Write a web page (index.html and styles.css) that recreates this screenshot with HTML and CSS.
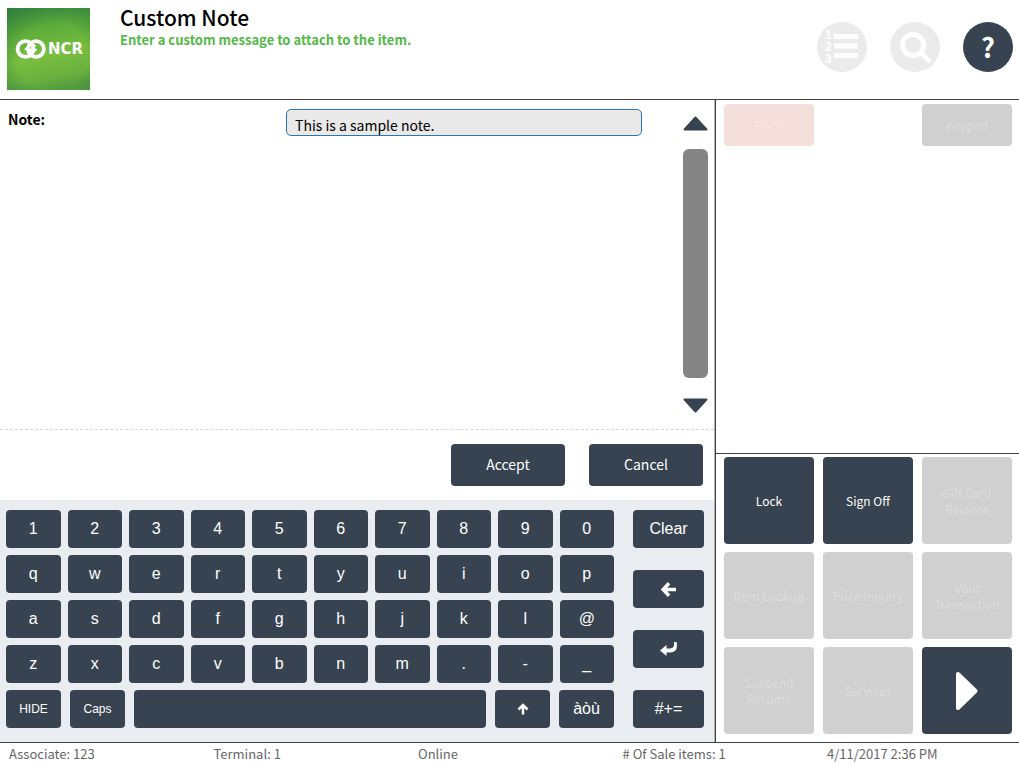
FILE: index.html
```html
<!DOCTYPE html>
<html lang="en">
<head>
<meta charset="utf-8">
<title>Custom Note</title>
<link rel="stylesheet" href="styles.css">
</head>
<body>
<header class="top">
  <svg class="logo" viewBox="0 0 83 82" role="img" aria-label="NCR">
    <defs>
      <linearGradient id="base" x1="0.3" y1="0" x2="0.5" y2="1">
        <stop offset="0" stop-color="#3f8f3d"/>
        <stop offset="0.25" stop-color="#5cab3a"/>
        <stop offset="0.6" stop-color="#78be3f"/>
        <stop offset="0.85" stop-color="#6bb13f"/>
        <stop offset="1" stop-color="#559d40"/>
      </linearGradient>
      <radialGradient id="shade" cx="0.55" cy="0.6" r="0.85">
        <stop offset="0.5" stop-color="#2b7a3d" stop-opacity="0"/>
        <stop offset="1" stop-color="#2b7a3d" stop-opacity="0.75"/>
      </radialGradient>
    </defs>
    <rect width="83" height="82" fill="url(#base)"/>
    <rect width="83" height="82" fill="url(#shade)"/>
    <g fill="none" stroke="#fff" stroke-width="3.8">
      <circle cx="18.500" cy="41" r="7.900"/>
      <circle cx="29" cy="41" r="7.900"/>
    </g>
    <path d="M18 42l7-7M20.500 45l8-8M23.500 47l6-6" stroke="#fff" stroke-width="2"/>
    <text class="logo-text" x="41" y="46">NCR</text>
  </svg>
  <div class="heading">
    <h1 class="title">Custom Note</h1>
    <p class="subtitle">Enter a custom message to attach to the item.</p>
  </div>
  <nav class="tools">
    <button class="round" disabled aria-label="Item list">
      <svg viewBox="0 0 50 50"><g class="list-nums"><text x="8" y="17">1</text><text x="8" y="29">2</text><text x="8" y="41">3</text></g>
      <path d="M17 12h24v5H17zM17 21.500h24v5H17zM17 31h24v5H17z" fill="#fff"/></svg>
    </button>
    <button class="round" disabled aria-label="Search">
      <svg viewBox="0 0 50 50" fill="none" stroke="#fff" stroke-width="5"><circle cx="23" cy="23" r="10.500"/><path d="M31 31l7.500 7.500" stroke-linecap="round"/></svg>
    </button>
    <button class="round help">?</button>
  </nav>
</header>
<main class="main">
  <section class="left">
    <div class="form">
      <label class="label" for="note">Note:</label>
      <input class="field" id="note" type="text" value="This is a sample note.">
      <div class="scroller">
        <button class="arrow" aria-label="Scroll up"><svg viewBox="0 0 25 15"><path d="M12.500 1.500L23.500 13.500H1.500z"/></svg></button>
        <div class="thumb"></div>
        <button class="arrow" aria-label="Scroll down"><svg viewBox="0 0 25 15"><path d="M12.500 13.500L23.500 1.500H1.500z"/></svg></button>
      </div>
    </div>
    <div class="actions">
      <button class="btn action">Accept</button>
      <button class="btn action">Cancel</button>
    </div>
    <div class="keyboard">
      <div class="rows">
        <div class="row"><button class="btn key">1</button><button class="btn key">2</button><button class="btn key">3</button><button class="btn key">4</button><button class="btn key">5</button><button class="btn key">6</button><button class="btn key">7</button><button class="btn key">8</button><button class="btn key">9</button><button class="btn key">0</button></div>
        <div class="row"><button class="btn key">q</button><button class="btn key">w</button><button class="btn key">e</button><button class="btn key">r</button><button class="btn key">t</button><button class="btn key">y</button><button class="btn key">u</button><button class="btn key">i</button><button class="btn key">o</button><button class="btn key">p</button></div>
        <div class="row"><button class="btn key">a</button><button class="btn key">s</button><button class="btn key">d</button><button class="btn key">f</button><button class="btn key">g</button><button class="btn key">h</button><button class="btn key">j</button><button class="btn key">k</button><button class="btn key">l</button><button class="btn key">@</button></div>
        <div class="row"><button class="btn key">z</button><button class="btn key">x</button><button class="btn key">c</button><button class="btn key">v</button><button class="btn key">b</button><button class="btn key">n</button><button class="btn key">m</button><button class="btn key">.</button><button class="btn key">-</button><button class="btn key">_</button></div>
        <div class="row-bottom">
          <button class="btn key small">HIDE</button>
          <button class="btn key small">Caps</button>
          <button class="btn key" aria-label="Space"></button>
          <button class="btn key" aria-label="Shift"><svg class="icon-up" viewBox="0 0 12 12"><path d="M6 11.500V2.500M1.500 6.500L6 2l4.500 4.500"/></svg></button>
          <button class="btn key">àòù</button>
        </div>
      </div>
      <div class="side">
        <button class="btn key">Clear</button>
        <button class="btn key" aria-label="Backspace"><svg class="icon-back" viewBox="0 0 14 14"><path d="M14 7H3M7.500 1.200L2 7l5.500 5.800"/></svg></button>
        <button class="btn key" aria-label="Enter"><svg class="icon-enter" viewBox="0 0 18 14"><path d="M0 8.500L6.500 3v3.500h3c3.500 0 5-2 4.500-6.500h2.500c1.500 7-1 10.500-6.500 10.500H6.500V14z"/></svg></button>
        <button class="btn key">#+=</button>
      </div>
    </div>
  </section>
  <aside class="right">
    <div class="panel">
      <button class="btn tile short back" disabled>Back</button>
      <button class="btn tile short keypad" disabled>Keypad</button>
    </div>
    <div class="tiles">
      <button class="btn tile">Lock</button>
      <button class="btn tile">Sign Off</button>
      <button class="btn tile" disabled>Gift Card Balance</button>
      <button class="btn tile" disabled>Item Lookup</button>
      <button class="btn tile" disabled>Price Inquiry</button>
      <button class="btn tile" disabled>Void Transaction</button>
      <button class="btn tile" disabled>Suspend Resume</button>
      <button class="btn tile" disabled>Services</button>
      <button class="btn tile" aria-label="Next page"><svg class="icon-next" viewBox="0 0 24 40"><path d="M3 3L20.500 20L3 37z"/></svg></button>
    </div>
  </aside>
</main>
<footer class="status">
  <span>Associate: 123</span><span>Terminal: 1</span><span>Online</span><span># Of Sale items: 1</span><span>4/11/2017 2:36 PM</span>
</footer>
</body>
</html>
```
FILE: styles.css
```css
* { box-sizing: border-box; }
body {
  margin: 0;
  min-height: 100vh;
  display: flex;
  flex-direction: column;
  background: #fff;
  color: #000;
  font-family: "Noto Sans CJK SC", "Noto Sans", sans-serif;
}
button { border: 0; padding: 0; margin: 0; font-family: inherit; }
svg { display: block; }

.top {
  display: flex;
  align-items: flex-start;
  padding: 8px 6px 9px 7px;
  border-bottom: 1px solid #3f4042;
}
.logo { width: 83px; height: 82px; }
.logo-text { font: 700 15px "DejaVu Sans", sans-serif; fill: #fff; }
.heading { flex: 1; padding-left: 30px; }
.title { margin: 0; font-size: 21px; font-weight: 500; line-height: 18px; }
.subtitle { margin: 6px 0 0; font-size: 13px; font-weight: 700; line-height: 16px; color: #54b948; }
.tools { display: flex; gap: 23px; padding-top: 14px; }
.round {
  width: 50px;
  height: 50px;
  border-radius: 50%;
  background: #ebebeb;
  color: #fff;
}
.help { background: #374350; font-size: 27px; font-weight: 700; line-height: 50px; }
.list-nums { font: 700 12px "Liberation Sans", Arial, sans-serif; fill: #fff; }

.main { flex: 1; display: grid; grid-template-columns: 715fr 304fr; }
.left { display: flex; flex-direction: column; border-right: 1px solid #b4b4b4; }
.form {
  flex: 1;
  display: grid;
  grid-template-columns: 278fr 356fr 41px 25px;
  align-items: start;
  padding: 9px 6px 9px 8px;
  border-bottom: 1px dashed #d6d6d6;
}
.label { font-size: 14px; font-weight: 700; line-height: 20px; }
.field {
  width: 100%;
  height: 27px;
  padding: 5px 8px 0;
  border: 1px solid #2a75bb;
  border-radius: 5px;
  background: #e9e9e9;
  color: #000;
  font-family: inherit;
  font-size: 14px;
}
.scroller {
  grid-column: 4;
  align-self: stretch;
  display: flex;
  flex-direction: column;
  gap: 18px;
  padding: 7px 0;
}
.arrow { height: 15px; background: none; }
.arrow path { fill: #374350; stroke: #374350; stroke-width: 2; stroke-linejoin: round; }
.thumb { flex: 1; margin-bottom: 2px; border-radius: 6px; background: #848484; }

.actions { display: flex; justify-content: flex-end; gap: 24px; padding: 14px 11px 14px 12px; }
.btn {
  display: flex;
  align-items: center;
  justify-content: center;
  border-radius: 4px;
  background: #374350;
  color: #fff;
}
.action { width: 114px; height: 42px; padding-bottom: 2px; font-size: 14px; }

.keyboard {
  display: grid;
  grid-template-columns: 608fr 71fr;
  gap: 19px;
  padding: 10px 10px 14px 6px;
  background: #e9edf2;
}
.rows { display: grid; gap: 7px; }
.row { display: grid; grid-template-columns: repeat(10, 1fr); gap: 7px; }
.row-bottom { display: grid; grid-template-columns: 55fr 55fr 352fr 55fr 55fr; gap: 9px; }
.side { display: flex; flex-direction: column; justify-content: space-between; }
.key { height: 38px; font-family: "Liberation Sans", Arial, sans-serif; font-size: 16px; }
.small { font-size: 12px; }
.icon-up { width: 12px; height: 12px; fill: none; stroke: #fff; stroke-width: 2.5; }
.icon-back { width: 15px; height: 15px; fill: none; stroke: #fff; stroke-width: 3.2; }
.icon-enter { width: 18px; height: 14px; fill: #fff; }

.right { display: flex; flex-direction: column; border-left: 1px solid #3f4042; }
.panel,
.tiles { display: grid; grid-template-columns: repeat(3, 1fr); gap: 8px 9px; }
.panel { flex: 1; align-items: start; padding: 4px 7px 4px 8px; }
.tiles { padding: 3px 7px 8px 8px; border-top: 1px solid #3f4042; }
.tile { height: 87px; font-size: 12px; font-weight: 400; line-height: 16px; }
.tile:disabled { background: #d0d0d0; color: #dcdcdc; }
.short { height: 42px; }
.back:disabled { background: #f5dfdb; color: #f8e6e3; }
.keypad { grid-column: 3; }
.icon-next { width: 24px; height: 40px; fill: #fff; stroke: #fff; stroke-width: 4; stroke-linejoin: round; }

.status {
  display: grid;
  grid-template-columns: repeat(4, 1fr) 192px;
  padding: 3px 0 2px 9px;
  border-top: 1px solid #3f4042;
  color: #666;
  font-size: 13px;
  line-height: 16px;
}
```
